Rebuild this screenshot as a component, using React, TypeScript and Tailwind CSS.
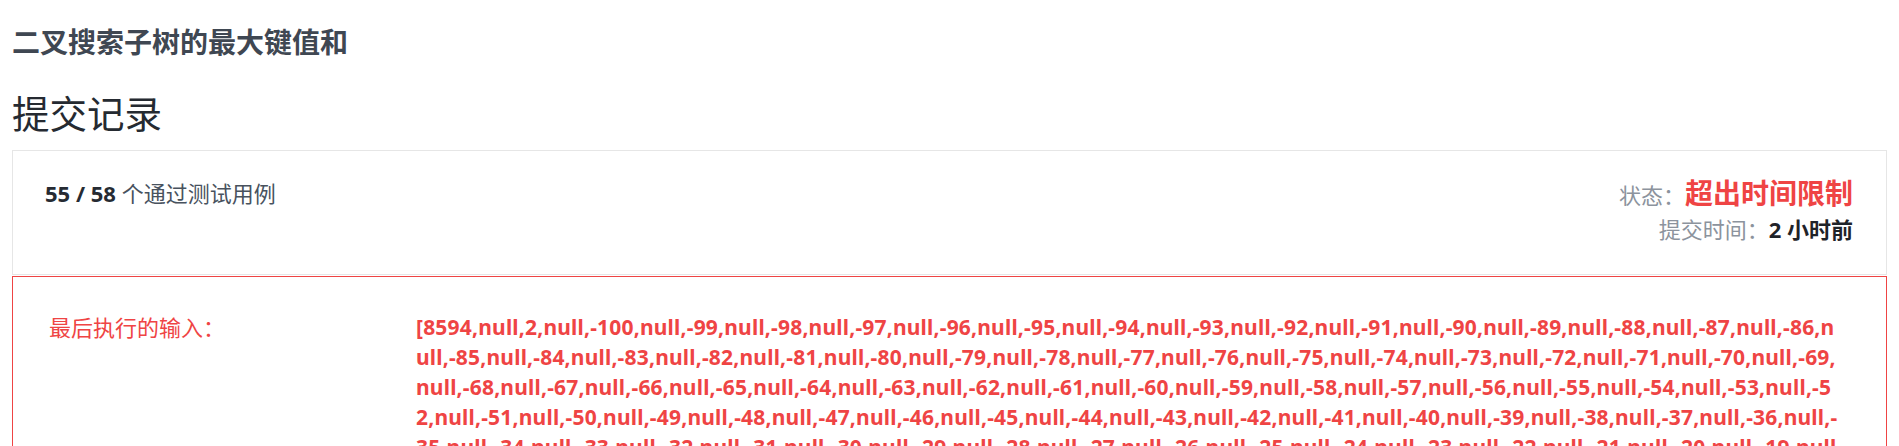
import React from 'react';

const inputLines = [
  '[8594,null,2,null,-100,null,-99,null,-98,null,-97,null,-96,null,-95,null,-94,null,-93,null,-92,null,-91,null,-90,null,-89,null,-88,null,-87,null,-86,n',
  'ull,-85,null,-84,null,-83,null,-82,null,-81,null,-80,null,-79,null,-78,null,-77,null,-76,null,-75,null,-74,null,-73,null,-72,null,-71,null,-70,null,-69,',
  'null,-68,null,-67,null,-66,null,-65,null,-64,null,-63,null,-62,null,-61,null,-60,null,-59,null,-58,null,-57,null,-56,null,-55,null,-54,null,-53,null,-5',
  '2,null,-51,null,-50,null,-49,null,-48,null,-47,null,-46,null,-45,null,-44,null,-43,null,-42,null,-41,null,-40,null,-39,null,-38,null,-37,null,-36,null,-',
  '35,null,-34,null,-33,null,-32,null,-31,null,-30,null,-29,null,-28,null,-27,null,-26,null,-25,null,-24,null,-23,null,-22,null,-21,null,-20,null,-19,null',
  ',-18,null,-17,null,-16,null,-15,null,-14,null,-13,null,-12,null,-11,null,-10,null,-9,null,-8,null,-7,null,-6,null,-5,null,-4,null,-3,null,-2,null,-1]',
];

const App = () => {
  return (
    <div className="min-h-screen bg-white px-3 font-['Noto_Sans','Noto_Sans_CJK_SC',sans-serif]">
      {/* Problem title */}
      <h4 className="pt-[27px] text-[28px] leading-[30px] font-bold text-[#3f4752]">二叉搜索子树的最大键值和</h4>

      {/* Page heading */}
      <h3 className="mt-[37px] text-[37.5px] leading-[40px] text-[#252a31]">提交记录</h3>

      {/* Summary panel */}
      <div className="mt-[16px] border border-[#e6e6e6] flex justify-between pt-[27px] pb-[30px] pl-[32px] pr-[33px]">
        <div className="text-[22px] leading-[30px] text-[#48525e]">
          <strong className="font-bold text-[#262b33]">55 / 58</strong> 个通过测试用例
        </div>
        <div className="text-right">
          <div className="text-[22px] leading-[30px] text-[#8c939d]">
            状态：<span className="text-[28px] font-bold text-[#ef4444]">超出时间限制</span>
          </div>
          <div className="mt-[4px] text-[22px] leading-[30px] text-[#8c939d]">
            提交时间：<strong className="font-bold text-[#1f2329]">2 小时前</strong>
          </div>
        </div>
      </div>

      {/* Last executed input */}
      <div className="mt-px border border-[#ef4444] flex pt-[35px] pb-[35px] pl-[36px]">
        <div className="w-[367px] shrink-0 text-[22px] leading-[30px] text-[#ef4444]">最后执行的输入：</div>
        <div className="text-[21px] leading-[30px] font-bold text-[#ef4444] tracking-[0.2px]">
          {inputLines.map((line, i) => (
            <div key={i} className="whitespace-nowrap">{line}</div>
          ))}
        </div>
      </div>
    </div>
  );
};

export default App;
